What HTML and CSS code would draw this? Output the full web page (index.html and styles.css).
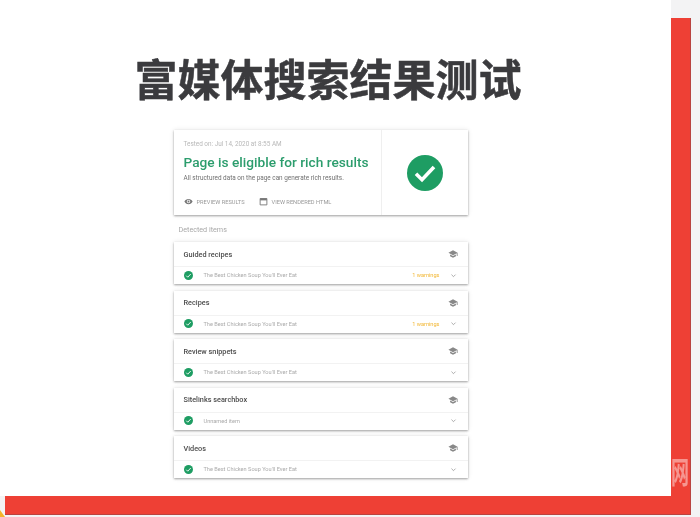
FILE: index.html
```html
<!doctype html>
<html lang="zh-CN">
<head>
  <meta charset="UTF-8">
  <title>富媒体搜索结果测试</title>
  <link rel="stylesheet" href="styles.css">
</head>
<body>
  <svg class="defs" width="0" height="0" aria-hidden="true">
    <symbol id="cap" viewBox="0 0 24 24"><path d="M12 3 1 9l11 6 9-4.9V17h2V9z"/><path d="M5 13.2v4L12 21l7-3.8v-4L12 17z"/></symbol>
    <symbol id="ok" viewBox="0 0 24 24"><circle cx="12" cy="12" r="12" fill="#1e9d63"/><path d="M6 12.5l4 4 8-8.5" fill="none" stroke="#fff" stroke-width="2.4"/></symbol>
    <symbol id="chev" viewBox="0 0 24 24"><path d="M5 9l7 7 7-7" fill="none" stroke="#8a8a8a" stroke-width="2.4"/></symbol>
  </svg>

  <div class="stage">
    <div class="red"></div>
    <div class="slide">
      <h1 class="title">富媒体搜索结果测试</h1>
      <div class="report">
        <div class="card summary">
          <div class="summary-main">
            <div class="tested">Tested on: Jul 14, 2020 at 8:55 AM</div>
            <div class="eligible">Page is eligible for rich results</div>
            <div class="note">All structured data on the page can generate rich results.</div>
            <div class="links">
              <span class="link">
                <svg class="link-icon" viewBox="0 0 24 24"><path d="M12 5C7 5 3 8 1 12c2 4 6 7 11 7s9-3 11-7c-2-4-6-7-11-7z" fill="#777"/><circle cx="12" cy="12" r="4.5" fill="#fff"/><circle cx="12" cy="12" r="2.5" fill="#777"/></svg>
                PREVIEW RESULTS
              </span>
              <span class="link">
                <svg class="link-icon" viewBox="0 0 24 24"><path d="M3 4h18v17H3z" fill="none" stroke="#777" stroke-width="2.4"/><path d="M3 4h18v5H3z" fill="#777"/></svg>
                VIEW RENDERED HTML
              </span>
            </div>
          </div>
          <div class="summary-mark">
            <svg class="big-ok" viewBox="0 0 24 24"><use href="#ok"/></svg>
          </div>
        </div>

        <div class="detected">Detected items</div>

        <div class="card item">
          <div class="item-head">Guided recipes <svg class="cap"><use href="#cap"/></svg></div>
          <div class="item-row">
            <svg class="ok"><use href="#ok"/></svg>
            <span class="item-name">The Best Chicken Soup You'll Ever Eat</span>
            <span class="warn">1 warnings</span>
            <svg class="chev"><use href="#chev"/></svg>
          </div>
        </div>

        <div class="card item">
          <div class="item-head">Recipes <svg class="cap"><use href="#cap"/></svg></div>
          <div class="item-row">
            <svg class="ok"><use href="#ok"/></svg>
            <span class="item-name">The Best Chicken Soup You'll Ever Eat</span>
            <span class="warn">1 warnings</span>
            <svg class="chev"><use href="#chev"/></svg>
          </div>
        </div>

        <div class="card item">
          <div class="item-head">Review snippets <svg class="cap"><use href="#cap"/></svg></div>
          <div class="item-row">
            <svg class="ok"><use href="#ok"/></svg>
            <span class="item-name">The Best Chicken Soup You'll Ever Eat</span>
            <svg class="chev"><use href="#chev"/></svg>
          </div>
        </div>

        <div class="card item">
          <div class="item-head">Sitelinks searchbox <svg class="cap"><use href="#cap"/></svg></div>
          <div class="item-row">
            <svg class="ok"><use href="#ok"/></svg>
            <span class="item-name">Unnamed item</span>
            <svg class="chev"><use href="#chev"/></svg>
          </div>
        </div>

        <div class="card item">
          <div class="item-head">Videos <svg class="cap"><use href="#cap"/></svg></div>
          <div class="item-row">
            <svg class="ok"><use href="#ok"/></svg>
            <span class="item-name">The Best Chicken Soup You'll Ever Eat</span>
            <svg class="chev"><use href="#chev"/></svg>
          </div>
        </div>
      </div>
    </div>
    <div class="watermark">网</div>
    <div class="corner"></div>
  </div>
</body>
</html>
```

FILE: styles.css
```css
html, body {
  margin: 0;
  height: 517px;
  overflow: hidden;
  background: #f3f3f4;
  font-family: Roboto, "Liberation Sans", sans-serif;
}
.defs {
  display: block;
}
.stage {
  position: relative;
  display: grid;
  width: 700px;
  height: 517px;
}
.red {
  grid-area: 1 / 1;
  margin: 18px 9px 2px 5px;
  background: #ee4035;
  box-shadow: inset -1px -1px 0 #b9433f;
  filter: blur(0.4px);
}
.slide {
  grid-area: 1 / 1;
  z-index: 1;
  width: 671px;
  height: 496px;
  background: #fff;
  box-sizing: border-box;
  padding-top: 46px;
  display: flex;
  flex-direction: column;
  align-items: center;
}
.title {
  margin: 0 15px 0 0;
  font-family: "Noto Sans CJK SC", sans-serif;
  font-size: 43px;
  line-height: 62px;
  font-weight: 700;
  color: #3b3b3e;
  -webkit-text-stroke: 0.5px #3b3b3e;
  filter: blur(0.7px);
}
.report {
  width: 294px;
  margin: 22px 30px 0 0;
  filter: blur(0.7px);
}
.card {
  background: #fff;
  box-shadow: 0 1px 2px rgba(60, 60, 60, 0.45), 0 0 5px rgba(0, 0, 0, 0.1);
}
.summary {
  height: 85px;
  display: flex;
}
.summary-main {
  flex: 1;
  padding: 10px 0 0 10px;
  border-right: 1px solid #efefef;
}
.summary-mark {
  width: 86px;
  display: flex;
  align-items: center;
  justify-content: center;
}
.big-ok {
  width: 36px;
  height: 36px;
}
.tested {
  font-size: 6.4px;
  line-height: 8px;
  color: #b8b8b8;
}
.eligible {
  margin-top: 6px;
  font-size: 13.7px;
  line-height: 17px;
  font-weight: 500;
  color: #2c9d6d;
  white-space: nowrap;
}
.note {
  margin-top: 3px;
  font-size: 6.4px;
  line-height: 8px;
  color: #707070;
}
.links {
  display: flex;
  gap: 14px;
  margin-top: 15px;
  font-size: 5.7px;
  color: #999;
}
.link {
  display: flex;
  align-items: center;
  gap: 4px;
}
.link-icon {
  width: 9px;
  height: 9px;
}
.detected {
  margin: 10px 0 0 5px;
  height: 17px;
  font-size: 7.2px;
  line-height: 10px;
  color: #a8a8a8;
}
.item {
  height: 42px;
  margin-bottom: 6.5px;
}
.item-head {
  height: 25px;
  box-sizing: border-box;
  padding: 0 10px;
  display: flex;
  align-items: center;
  justify-content: space-between;
  font-size: 7.3px;
  font-weight: 500;
  color: #4c4c4c;
  border-bottom: 1px solid #f2f2f2;
}
.cap {
  width: 10px;
  height: 10px;
  fill: #888;
}
.item-row {
  height: 16px;
  padding: 0 11px 0 10px;
  display: flex;
  align-items: center;
  font-size: 5.6px;
  color: #aaa;
}
.ok {
  width: 9px;
  height: 9px;
}
.item-name {
  flex: 1;
  margin-left: 11px;
}
.warn {
  font-size: 5.6px;
  color: #f2b632;
  margin-right: 10px;
}
.chev {
  width: 7px;
  height: 7px;
}
.watermark {
  position: absolute;
  left: 671px;
  top: 451px;
  width: 18px;
  z-index: 2;
  font-family: "Noto Sans CJK SC", sans-serif;
  font-size: 30px;
  line-height: 38px;
  font-weight: 700;
  color: rgba(255, 255, 255, 0.45);
  transform: scaleX(0.6);
  transform-origin: left;
  filter: blur(0.6px);
}
.corner {
  position: absolute;
  left: 0;
  top: 510px;
  z-index: 2;
  border-left: 5px solid #f4b52c;
  border-top: 7px solid transparent;
}
```
